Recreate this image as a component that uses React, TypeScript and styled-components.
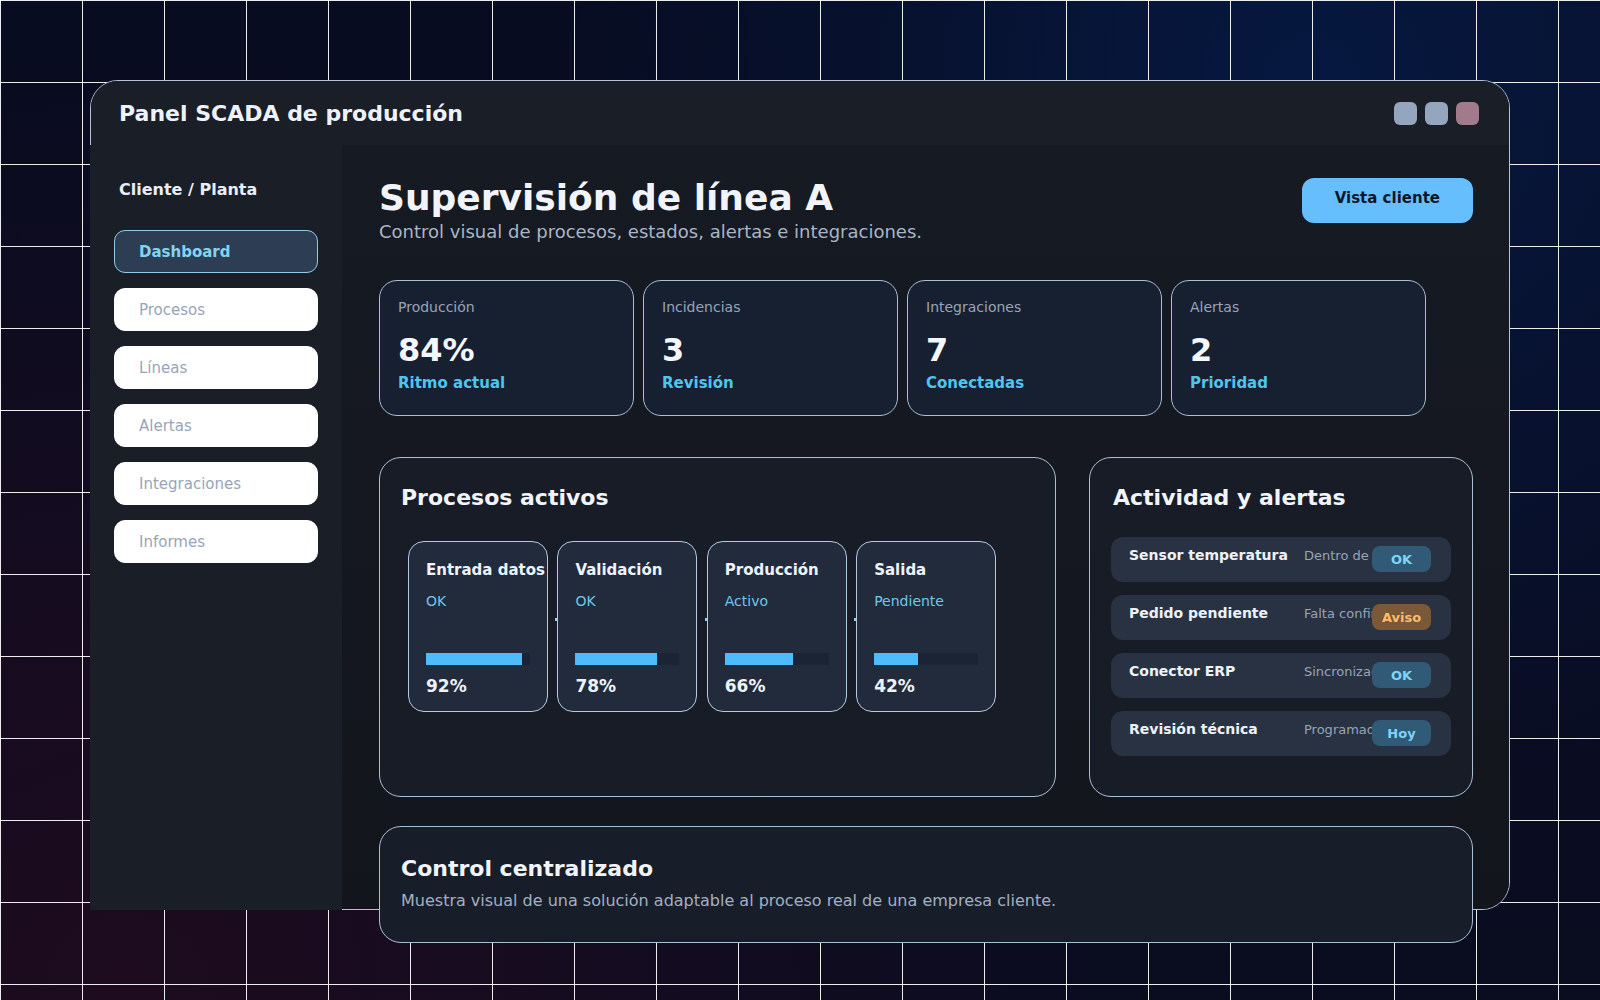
import { createGlobalStyle, styled } from "styled-components";

const GlobalStyle = createGlobalStyle`
  * {
    box-sizing: border-box;
  }
  body {
    margin: 0;
    font-family: "DejaVu Sans", "Liberation Sans", sans-serif;
    background: #070c20;
  }
`;

const Page = styled.div`
  min-height: 100vh;
  padding: 80px 90px;
  background-color: #070c20;
  background-image: linear-gradient(rgba(255, 255, 255, 0.92) 1px, transparent 1px),
    linear-gradient(90deg, rgba(255, 255, 255, 0.92) 1px, transparent 1px),
    radial-gradient(circle at 82% 8%, #061840 0%, rgba(6, 24, 64, 0) 48%),
    radial-gradient(circle at 8% 100%, #1e0b1f 0%, rgba(30, 11, 31, 0) 55%),
    linear-gradient(180deg, #070c20, #0a0c20);
  background-size: 82px 82px, 82px 82px, 100% 100%, 100% 100%, 100% 100%;
`;

const Window = styled.div`
  height: 830px;
  display: flex;
  flex-direction: column;
  border: 1px solid #b4c3d6;
  border-radius: 28px;
  background: #14171f;
`;

const TitleBar = styled.header`
  height: 64px;
  flex-shrink: 0;
  display: flex;
  align-items: center;
  justify-content: space-between;
  padding: 1px 30px 0 28px;
  background: #1a1e27;
  border-radius: 27px 27px 0 0;
`;

const AppTitle = styled.h1`
  margin: 0;
  font-size: 22px;
  font-weight: 700;
  color: #eef3fb;
`;

const Dots = styled.div`
  display: flex;
  gap: 8px;
`;

const Dot = styled.span<{ $tone: string }>`
  width: 23px;
  height: 23px;
  border-radius: 6px;
  background: ${(p) => p.$tone};
`;

const Body = styled.div`
  flex: 1;
  display: grid;
  grid-template-columns: 251px 1fr;
  grid-template-rows: minmax(0, 1fr);
  min-height: 0;
`;

const Sidebar = styled.aside`
  margin: 0 0 -1px -1px;
  background: #1a1e27;
  padding: 35px 24px;
`;

const SideHeading = styled.div`
  padding-left: 5px;
  font-size: 16px;
  font-weight: 700;
  color: #e9eef6;
  margin-bottom: 31px;
`;

const Nav = styled.nav`
  display: flex;
  flex-direction: column;
  gap: 15px;
`;

const NavItem = styled.div<{ $active?: boolean }>`
  height: 43px;
  display: flex;
  align-items: center;
  padding: 0 24px;
  border-radius: 11px;
  font-size: 15px;
  border: 1px solid ${(p) => (p.$active ? "#93cbe6" : "#ffffff")};
  background: ${(p) => (p.$active ? "#2c3d54" : "#ffffff")};
  color: ${(p) => (p.$active ? "#84d3f1" : "#97a5ba")};
  font-weight: ${(p) => (p.$active ? 700 : 400)};
`;

const Main = styled.main`
  padding: 32px 36px 0 37px;
  background: linear-gradient(180deg, #161a22, #12151c);
  border-bottom-right-radius: 27px;
  min-width: 0;
`;

const TopRow = styled.div`
  display: flex;
  justify-content: space-between;
  align-items: flex-start;
`;

const PageTitle = styled.h2`
  margin: 0;
  font-size: 36px;
  font-weight: 700;
  color: #f1f5fb;
`;

const Subtitle = styled.p`
  margin: 3px 0 0;
  font-size: 18px;
  color: #a9b5c8;
`;

const PrimaryButton = styled.button`
  height: 45px;
  margin-top: 1px;
  padding: 0 33px 5px;
  border: none;
  border-radius: 12px;
  background: #67befd;
  color: #0f172a;
  font-family: inherit;
  font-size: 15px;
  font-weight: 700;
`;

const Stats = styled.div`
  display: grid;
  grid-template-columns: repeat(4, 255px);
  gap: 9px;
  margin-top: 38px;
`;

const StatCard = styled.div`
  height: 136px;
  padding: 18px 18px 0;
  border: 1px solid #a9bfd6;
  border-radius: 18px;
  background: #172030;
`;

const StatLabel = styled.div`
  font-size: 14px;
  color: #97a4b8;
`;

const StatValue = styled.div`
  margin-top: 16px;
  font-size: 32px;
  font-weight: 700;
  color: #f4f7fb;
`;

const StatNote = styled.div`
  margin-top: 5px;
  font-size: 15px;
  font-weight: 700;
  color: #4fc5ee;
`;

const PanelRow = styled.div`
  display: grid;
  grid-template-columns: 1fr 384px;
  gap: 33px;
  margin-top: 41px;
`;

const Panel = styled.section`
  height: 340px;
  padding: 27px 21px;
  border: 1px solid #a9bfd6;
  border-radius: 22px;
  background: #171c27;
`;

const PanelTitle = styled.h3`
  margin: 0;
  font-size: 22px;
  font-weight: 700;
  color: #f1f5fb;
`;

const FeedHeading = styled(PanelTitle)`
  padding-left: 2px;
`;

const Flow = styled.div`
  display: flex;
  gap: 9.4px;
  margin-top: 31px;
  padding-left: 7px;
`;

const StepCard = styled.div<{ $linked?: boolean }>`
  position: relative;
  width: 140px;
  height: 171px;
  flex-shrink: 0;
  display: flex;
  flex-direction: column;
  padding: 19px 17px 15px;
  border: 1px solid #b3cbe2;
  border-radius: 16px;
  background: #212b3c;

  &::before {
    content: "";
    display: ${(p) => (p.$linked ? "block" : "none")};
    position: absolute;
    left: -3px;
    top: 76px;
    width: 2px;
    height: 3px;
    background: #8fd0f0;
  }
`;

const StepName = styled.div`
  font-size: 15px;
  font-weight: 700;
  color: #eef3fa;
  white-space: nowrap;
`;

const StepStatus = styled.div`
  margin-top: 14px;
  font-size: 14px;
  color: #70c7ea;
`;

const Track = styled.div`
  margin-top: auto;
  height: 12px;
  background: #1a2434;
`;

const Fill = styled.div`
  height: 100%;
  background: #4ebcfc;
`;

const StepValue = styled.div`
  margin-top: 11px;
  font-size: 17px;
  font-weight: 700;
  color: #eef3fa;
`;

const Feed = styled.div`
  display: flex;
  flex-direction: column;
  gap: 13px;
  margin-top: 27px;
`;

const FeedRow = styled.div`
  height: 45px;
  display: grid;
  grid-template-columns: 175px 68px 59px;
  align-items: start;
  padding: 9px 20px 0 18px;
  border-radius: 12px;
  background: #283242;
`;

const FeedTitle = styled.div`
  padding-top: 1px;
  font-size: 14px;
  font-weight: 700;
  color: #eef2f8;
  white-space: nowrap;
`;

const FeedText = styled.div`
  padding-top: 2px;
  font-size: 13px;
  color: #97a4b8;
  white-space: nowrap;
  overflow: hidden;
`;

const Badge = styled.span<{ $warn?: boolean }>`
  height: 26px;
  display: flex;
  align-items: center;
  justify-content: center;
  border-radius: 8px;
  font-size: 13px;
  font-weight: 700;
  background: ${(p) => (p.$warn ? "#7a5838" : "#315a77")};
  color: ${(p) => (p.$warn ? "#f8bd6c" : "#7fd5f8")};
`;

const Footer = styled.section`
  margin-top: 29px;
  padding: 29px 21px 32px;
  border: 1px solid #a9bfd6;
  border-radius: 22px;
  background: #181e29;
`;

const FooterText = styled.p`
  margin: 10px 0 0;
  font-size: 16px;
  color: #a3afc2;
`;

const navItems = ["Dashboard", "Procesos", "Líneas", "Alertas", "Integraciones", "Informes"];

const stats = [
  { label: "Producción", value: "84%", note: "Ritmo actual" },
  { label: "Incidencias", value: "3", note: "Revisión" },
  { label: "Integraciones", value: "7", note: "Conectadas" },
  { label: "Alertas", value: "2", note: "Prioridad" },
];

const steps = [
  { name: "Entrada datos", status: "OK", value: 92 },
  { name: "Validación", status: "OK", value: 78 },
  { name: "Producción", status: "Activo", value: 66 },
  { name: "Salida", status: "Pendiente", value: 42 },
];

const feed = [
  { title: "Sensor temperatura", text: "Dentro de rango", badge: "OK" },
  { title: "Pedido pendiente", text: "Falta confirmación", badge: "Aviso", warn: true },
  { title: "Conector ERP", text: "Sincronizado", badge: "OK" },
  { title: "Revisión técnica", text: "Programada", badge: "Hoy" },
];

const App = () => {
  return (
    <Page>
      <GlobalStyle />
      <Window>
        <TitleBar>
          <AppTitle>Panel SCADA de producción</AppTitle>
          <Dots>
            <Dot $tone="#94a6bd" />
            <Dot $tone="#94a6bd" />
            <Dot $tone="#a17b8b" />
          </Dots>
        </TitleBar>
        <Body>
          <Sidebar>
            <SideHeading>Cliente / Planta</SideHeading>
            <Nav>
              {navItems.map((item, i) => (
                <NavItem key={item} $active={i === 0}>
                  {item}
                </NavItem>
              ))}
            </Nav>
          </Sidebar>
          <Main>
            <TopRow>
              <div>
                <PageTitle>Supervisión de línea A</PageTitle>
                <Subtitle>Control visual de procesos, estados, alertas e integraciones.</Subtitle>
              </div>
              <PrimaryButton>Vista cliente</PrimaryButton>
            </TopRow>

            <Stats>
              {stats.map((s) => (
                <StatCard key={s.label}>
                  <StatLabel>{s.label}</StatLabel>
                  <StatValue>{s.value}</StatValue>
                  <StatNote>{s.note}</StatNote>
                </StatCard>
              ))}
            </Stats>

            <PanelRow>
              <Panel>
                <PanelTitle>Procesos activos</PanelTitle>
                <Flow>
                  {steps.map((step, i) => (
                    <StepCard key={step.name} $linked={i > 0}>
                      <StepName>{step.name}</StepName>
                      <StepStatus>{step.status}</StepStatus>
                      <Track>
                        <Fill style={{ width: `${step.value}%` }} />
                      </Track>
                      <StepValue>{step.value}%</StepValue>
                    </StepCard>
                  ))}
                </Flow>
              </Panel>
              <Panel>
                <FeedHeading>Actividad y alertas</FeedHeading>
                <Feed>
                  {feed.map((f) => (
                    <FeedRow key={f.title}>
                      <FeedTitle>{f.title}</FeedTitle>
                      <FeedText>{f.text}</FeedText>
                      <Badge $warn={f.warn}>{f.badge}</Badge>
                    </FeedRow>
                  ))}
                </Feed>
              </Panel>
            </PanelRow>

            <Footer>
              <PanelTitle>Control centralizado</PanelTitle>
              <FooterText>
                Muestra visual de una solución adaptable al proceso real de una empresa cliente.
              </FooterText>
            </Footer>
          </Main>
        </Body>
      </Window>
    </Page>
  );
};

export default App;
